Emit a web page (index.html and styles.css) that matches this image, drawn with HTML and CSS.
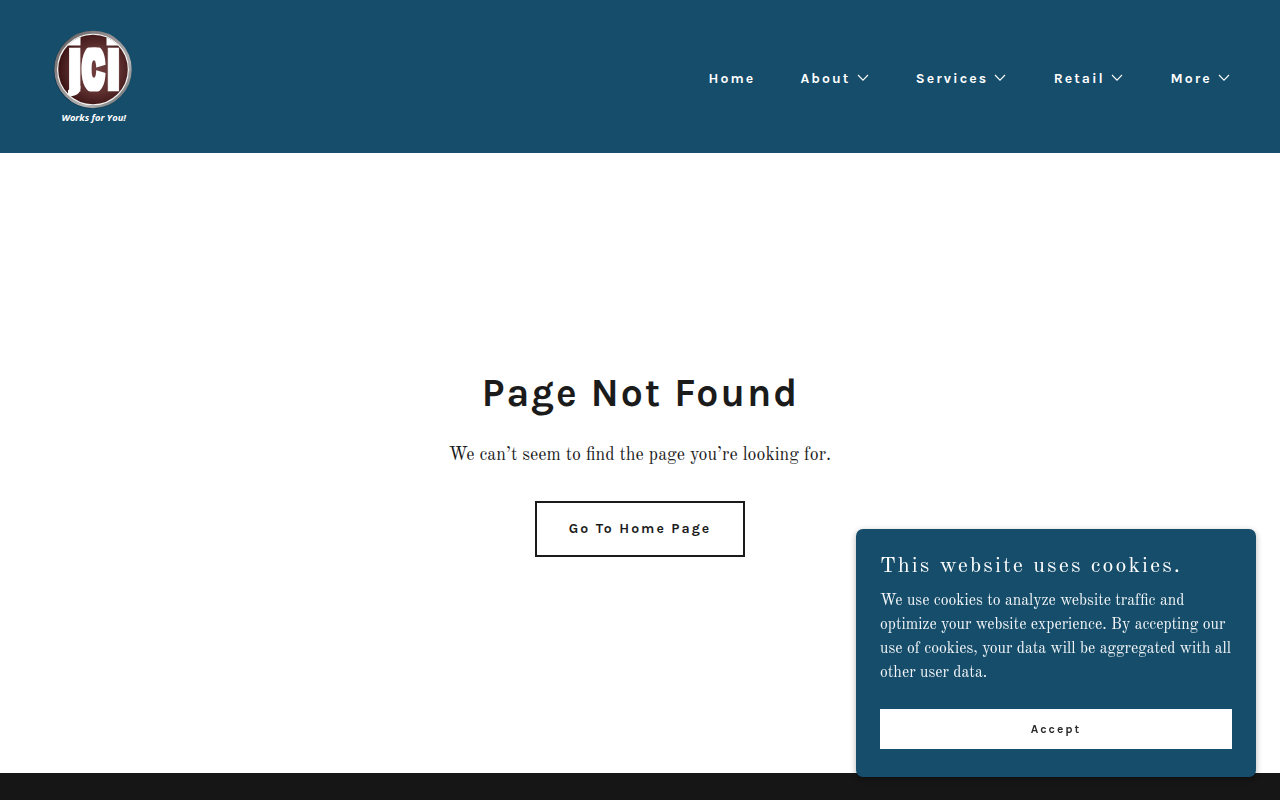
FILE: index.html
```html
<!DOCTYPE html>
<html lang="en">
<head>
    <meta charset="UTF-8">
    <meta name="viewport" content="width=device-width, initial-scale=1.0">
    <title>Page Not Found</title>
    <link rel="stylesheet" href="styles.css">
</head>
<body>
    <header class="header">
        <a class="logo" href="#">
            <svg width="90" height="104" viewBox="48 24 90 104">
                <defs>
                    <linearGradient id="ring" x1="0" y1="0" x2="1" y2="1">
                        <stop offset="0" stop-color="#5a5454"/>
                        <stop offset="0.3" stop-color="#8d8585"/>
                        <stop offset="0.7" stop-color="#b5b3b3"/>
                        <stop offset="1" stop-color="#55595c"/>
                    </linearGradient>
                    <radialGradient id="disc" cx="0.55" cy="0.5" r="0.55">
                        <stop offset="0" stop-color="#713f3f"/>
                        <stop offset="0.6" stop-color="#5e3030"/>
                        <stop offset="1" stop-color="#3a1212"/>
                    </radialGradient>
                    <clipPath id="inner"><circle cx="93" cy="69.5" r="35"/></clipPath>
                    <clipPath id="stems"><path d="M60 47.5h64v44H60z"/></clipPath>
                </defs>
                <circle cx="92.5" cy="70" r="39" fill="#103c55"/>
                <circle cx="93" cy="69.5" r="37.3" fill="none" stroke="url(#ring)" stroke-width="2.8"/>
                <circle cx="93" cy="69.5" r="35.4" fill="url(#disc)" stroke="#f4f0ee" stroke-width="1.3"/>
                <g clip-path="url(#inner)" fill="#fff">
                    <path d="M68 30h12.5v15.5H68zM106.500 30h12v15.500h-12z"/>
                    <path d="M80.500 86c0 8-4 10.500-12.500 10v-6c2 0 3-1 3-4z"/>
                    <g class="logo-name" clip-path="url(#stems)">
                        <text class="logo-stem" transform="translate(66.700 91) scale(.68 1)">j</text>
                        <text class="logo-c" transform="translate(81.300 90) scale(.51 .98)">c</text>
                        <text class="logo-stem" transform="translate(105.400 91) scale(.68 1)">i</text>
                    </g>
                </g>
                <text class="logo-tagline" x="61.500" y="120.500" textLength="64.500" lengthAdjust="spacingAndGlyphs">Works for You!</text>
            </svg>
        </a>
        <nav class="nav">
            <a class="nav-link" href="#"><span>Home</span></a>
            <a class="nav-link" href="#"><span>About</span><svg class="chevron" viewBox="0 0 12 8"><path d="M1 1l5 5.200 5-5.200"/></svg></a>
            <a class="nav-link" href="#"><span>Services</span><svg class="chevron" viewBox="0 0 12 8"><path d="M1 1l5 5.200 5-5.200"/></svg></a>
            <a class="nav-link" href="#"><span>Retail</span><svg class="chevron" viewBox="0 0 12 8"><path d="M1 1l5 5.200 5-5.200"/></svg></a>
            <a class="nav-link" href="#"><span>More</span><svg class="chevron" viewBox="0 0 12 8"><path d="M1 1l5 5.200 5-5.200"/></svg></a>
        </nav>
    </header>

    <main class="content">
        <h1>Page Not Found</h1>
        <p class="message">We can’t seem to find the page you’re looking for.</p>
        <a class="home-button" href="#">Go To Home Page</a>
    </main>

    <footer class="footer"></footer>

    <div class="cookie-banner">
        <h4>This website uses cookies.</h4>
        <p>We use cookies to analyze website traffic and<br>optimize your website experience. By accepting our<br>use of cookies, your data will be aggregated with all<br>other user data.</p>
        <button class="accept-button">Accept</button>
    </div>
</body>
</html>
```
FILE: styles.css
```css
* {
    box-sizing: border-box;
}
body {
    margin: 0;
    height: 100vh;
    overflow: hidden;
    display: flex;
    flex-direction: column;
    font-family: Karla, Roboto, sans-serif;
    background: #fff;
    color: #1b1b1b;
}
a {
    color: inherit;
    text-decoration: none;
}
.header {
    height: 153px;
    flex: none;
    padding: 24px 50px 25px 48px;
    display: flex;
    justify-content: space-between;
    background: #164d6b;
    color: #fff;
}
.logo svg {
    display: block;
}
.logo-name {
    font-family: Inter, sans-serif;
    font-size: 79px;
    font-weight: 900;
    stroke: #fff;
}
.logo-stem {
    stroke-width: 1;
}
.logo-c {
    stroke-width: 4;
}
.logo-tagline {
    font-family: "Open Sans", sans-serif;
    font-size: 9.6px;
    font-weight: 700;
    font-style: italic;
    fill: #fff;
}
.nav {
    display: flex;
    align-items: center;
    gap: 47.2px;
    height: 108px;
}
.nav-link {
    display: flex;
    align-items: center;
    font-size: 14px;
    font-weight: 700;
    letter-spacing: 2.05px;
}
.nav-link span {
    margin-right: -2px;
}
.chevron {
    width: 12px;
    height: 8px;
    margin-left: 8.3px;
    fill: none;
    stroke: #fff;
    stroke-width: 1.1;
}
.content {
    flex: none;
    height: 620px;
    padding-top: 216px;
    display: flex;
    flex-direction: column;
    align-items: center;
}
h1 {
    margin: 0;
    padding-left: 1px;
    font-size: 39px;
    line-height: 48px;
    font-weight: 700;
    letter-spacing: 2.05px;
}
.message {
    margin: 24px 0 0;
    font-family: "Old Standard TT", "Liberation Serif", serif;
    font-size: 17.95px;
    line-height: 28px;
}
.home-button {
    width: 210px;
    height: 56px;
    margin-top: 32px;
    border: 2px solid #1b1b1b;
    font-size: 14px;
    line-height: 52px;
    font-weight: 700;
    letter-spacing: 2px;
    text-align: center;
    white-space: nowrap;
}
.footer {
    flex: 1;
    background: #161616;
}
.cookie-banner {
    position: fixed;
    right: 24px;
    bottom: 23px;
    width: 400px;
    height: 248px;
    padding: 21px 24px 28px;
    border-radius: 7px;
    background: #164d6b;
    color: #fff;
    font-family: "Old Standard TT", "Liberation Serif", serif;
    box-shadow: 0 2px 6px rgba(0, 0, 0, 0.3);
}
.cookie-banner h4 {
    margin: 0;
    font-size: 22px;
    line-height: 32px;
    font-weight: 400;
    letter-spacing: 2.08px;
    white-space: nowrap;
}
.cookie-banner p {
    margin: 7px 0 24px;
    font-size: 15.75px;
    line-height: 24px;
    white-space: nowrap;
    color: #f3f6f8;
}
.accept-button {
    display: block;
    width: 100%;
    height: 40px;
    padding: 0;
    border: 0;
    background: #fff;
    color: #2b2b2b;
    font-family: Karla, Roboto, sans-serif;
    font-size: 12px;
    font-weight: 700;
    letter-spacing: 2px;
}
```
